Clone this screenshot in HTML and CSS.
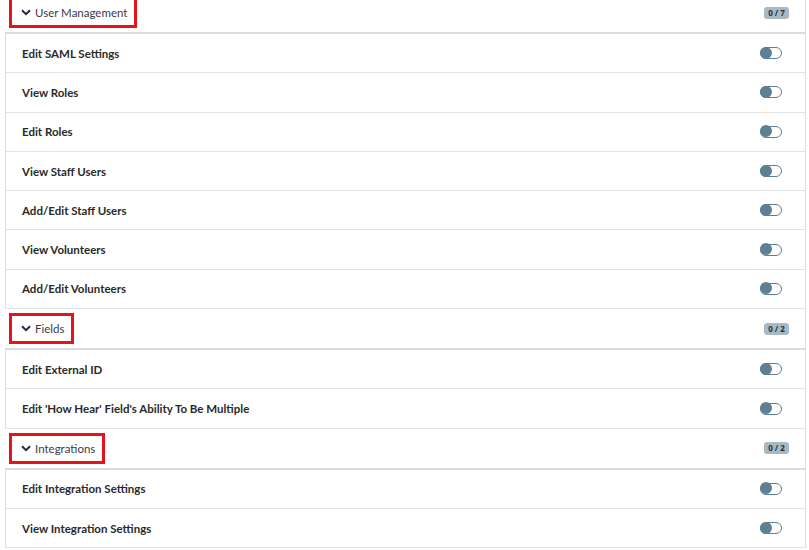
FILE: index.html
```html
<!DOCTYPE html>
<html lang="en">
<head>
    <meta charset="UTF-8">
    <title>Permissions</title>
    <link rel="stylesheet" href="styles.css">
</head>
<body>
    <div class="panel">
        <div class="group-head first">
            <span class="group-title"><svg class="chev" viewBox="0 0 10 7"><polyline points="1,1.2 5,5.2 9,1.2"/></svg>User Management</span>
            <span class="badge">0 / 7</span>
        </div>
        <div class="perm"><span>Edit SAML Settings</span><span class="toggle"></span></div>
        <div class="perm"><span>View Roles</span><span class="toggle"></span></div>
        <div class="perm"><span>Edit Roles</span><span class="toggle"></span></div>
        <div class="perm"><span>View Staff Users</span><span class="toggle"></span></div>
        <div class="perm"><span>Add/Edit Staff Users</span><span class="toggle"></span></div>
        <div class="perm"><span>View Volunteers</span><span class="toggle"></span></div>
        <div class="perm"><span>Add/Edit Volunteers</span><span class="toggle"></span></div>

        <div class="group-head">
            <span class="group-title"><svg class="chev" viewBox="0 0 10 7"><polyline points="1,1.2 5,5.2 9,1.2"/></svg>Fields</span>
            <span class="badge">0 / 2</span>
        </div>
        <div class="perm"><span>Edit External ID</span><span class="toggle"></span></div>
        <div class="perm"><span>Edit 'How Hear' Field's Ability To Be Multiple</span><span class="toggle"></span></div>

        <div class="group-head">
            <span class="group-title"><svg class="chev" viewBox="0 0 10 7"><polyline points="1,1.2 5,5.2 9,1.2"/></svg>Integrations</span>
            <span class="badge">0 / 2</span>
        </div>
        <div class="perm"><span>Edit Integration Settings</span><span class="toggle"></span></div>
        <div class="perm"><span>View Integration Settings</span><span class="toggle"></span></div>
    </div>
</body>
</html>
```

FILE: styles.css
```css
body {
    margin: 0;
    background: #fff;
    font-family: Lato, "Noto Sans", sans-serif;
    color: #222;
}
.panel {
    margin: -7px 0 0 5px;
    width: 801px;
    box-sizing: border-box;
    border-left: 1px solid #dedede;
    border-right: 1px solid #dedede;
}
.group-head {
    height: 41px;
    box-sizing: border-box;
    border-bottom: 2px solid #dcdcdc;
    display: flex;
    align-items: center;
    justify-content: space-between;
    padding: 0 16px 0 4px;
    margin-left: -1px;
    background: #fff;
}
.group-title {
    display: flex;
    align-items: center;
    gap: 4px;
    height: 25px;
    padding: 0 7px 0 9px;
    border: 3px solid #e3151a;
    font-size: 11.5px;
    color: #3b3b48;
}
.chev {
    width: 10px;
    height: 7px;
    fill: none;
    stroke: #1f2a44;
    stroke-width: 2;
}
.badge {
    background: #a9b9c4;
    color: #22323f;
    font-family: "Noto Sans", sans-serif;
    font-size: 8px;
    font-weight: 700;
    border-radius: 3px;
    width: 25px;
    height: 12px;
    line-height: 12px;
    text-align: center;
}
.perm {
    height: 39.3px;
    box-sizing: border-box;
    border-bottom: 1px solid #e2e2e2;
    display: flex;
    align-items: center;
    justify-content: space-between;
    padding: 0 23px 0 16px;
    font-size: 11.5px;
    font-weight: 700;
    color: #2a2a2a;
}
.toggle {
    position: relative;
    width: 22px;
    height: 12px;
    box-sizing: border-box;
    border: 1.5px solid #5f7f94;
    border-radius: 6px;
    background: #fff;
}
.toggle::before {
    content: "";
    position: absolute;
    left: -1.5px;
    top: -1.5px;
    width: 12px;
    height: 12px;
    border-radius: 50%;
    background: #5f7f94;
}
```
